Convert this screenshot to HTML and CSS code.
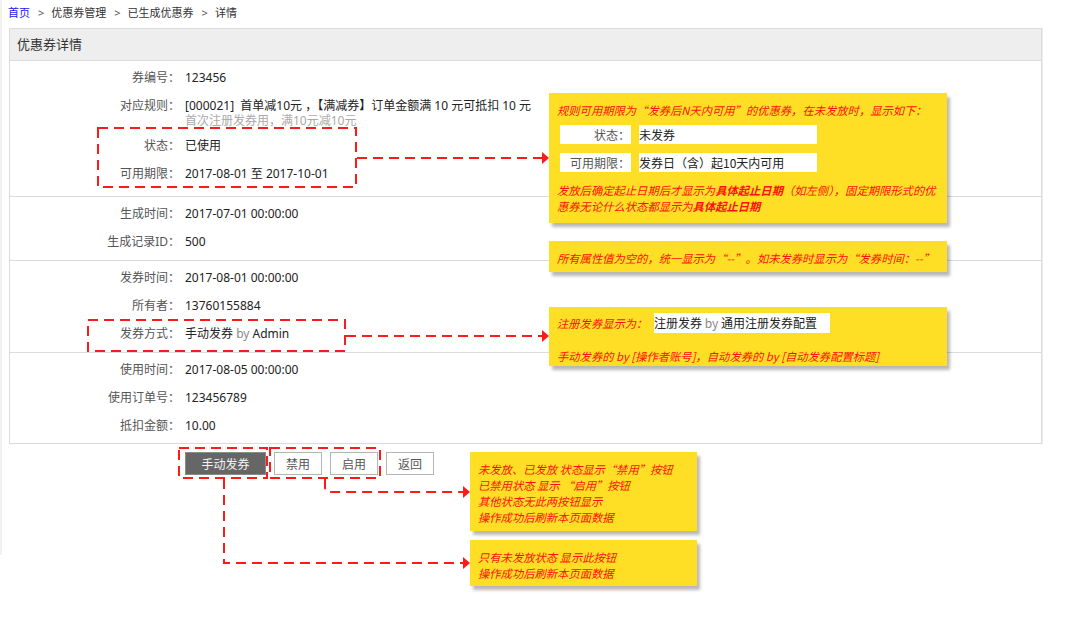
FILE: index.html
```html
<!DOCTYPE html>
<html lang="zh-CN">
<head>
<meta charset="utf-8">
<title>优惠券详情</title>
<link rel="stylesheet" href="styles.css">
</head>
<body>
<div class="page">
  <div class="crumb"><a class="home">首页</a><span class="sep">&gt;</span>优惠券管理<span class="sep">&gt;</span>已生成优惠券<span class="sep">&gt;</span>详情</div>

  <div class="panel">
    <div class="panel-head">优惠券详情</div>
    <div class="sec sec-first">
      <div class="row"><div class="lbl">券编号：</div><div class="val">123456</div></div>
      <div class="row"><div class="lbl">对应规则：</div><div class="val">[000021]&nbsp; 首单减10元 ，【满减券】订单金额满 10 元可抵扣 10 元<div class="sub">首次注册发券用，满10元减10元</div></div></div>
      <div class="row"><div class="lbl">状态：</div><div class="val">已使用</div></div>
      <div class="row"><div class="lbl">可用期限：</div><div class="val">2017-08-01 至 2017-10-01</div></div>
    </div>
    <div class="sec">
      <div class="row"><div class="lbl">生成时间：</div><div class="val">2017-07-01 00:00:00</div></div>
      <div class="row"><div class="lbl">生成记录ID：</div><div class="val">500</div></div>
    </div>
    <div class="sec">
      <div class="row"><div class="lbl">发券时间：</div><div class="val">2017-08-01 00:00:00</div></div>
      <div class="row"><div class="lbl">所有者：</div><div class="val">13760155884</div></div>
      <div class="row"><div class="lbl">发券方式：</div><div class="val">手动发券 <span class="by">by</span> Admin</div></div>
    </div>
    <div class="sec sec-last">
      <div class="row"><div class="lbl">使用时间：</div><div class="val">2017-08-05 00:00:00</div></div>
      <div class="row"><div class="lbl">使用订单号：</div><div class="val">123456789</div></div>
      <div class="row"><div class="lbl">抵扣金额：</div><div class="val">10.00</div></div>
    </div>
  </div>

  <div class="actions">
    <button class="btn btn-dark">手动发券</button>
    <button class="btn">禁用</button>
    <button class="btn">启用</button>
    <button class="btn">返回</button>
  </div>

  <svg class="annot" width="1069" height="618" viewBox="0 0 1069 618" xmlns="http://www.w3.org/2000/svg">
    <g fill="none" stroke="#ff1a1a" stroke-width="2" stroke-dasharray="10 6">
      <rect x="98" y="128" width="258" height="59"/>
      <path d="M357 158 H542"/>
      <rect x="88" y="320" width="257" height="31"/>
      <path d="M346 336 H542"/>
      <rect x="179" y="448" width="88" height="30"/>
      <rect x="270" y="448" width="110" height="30"/>
      <path d="M325 479 V487 Q325 492 330 492 H463"/>
      <path d="M224 479 V563 H463"/>
    </g>
    <g fill="#ff1a1a">
      <path d="M542 152 L549 158 L542 164 Z"/>
      <path d="M542 330 L549 336 L542 342 Z"/>
      <path d="M463 486 L470 492 L463 498 Z"/>
      <path d="M463 557 L470 563 L463 569 Z"/>
    </g>
  </svg>

  <div class="note n1">
    <p>规则可用期限为“发券后N天内可用”的优惠券，在未发放时，显示如下：</p>
    <div class="kv"><span class="k">状态：</span><span class="v">未发券</span></div>
    <div class="kv"><span class="k">可用期限：</span><span class="v">发券日（含）起10天内可用</span></div>
    <p class="gap">发放后确定起止日期后才显示为<b>具体起止日期</b>（如左侧），固定期限形式的优惠券无论什么状态都显示为<b>具体起止日期</b></p>
  </div>

  <div class="note n2">
    <p>所有属性值为空的，统一显示为“--”。如未发券时显示为“发券时间：--”</p>
  </div>

  <div class="note n3">
    <div class="reg"><span class="reg-t">注册发券显示为：</span><span class="reg-v">注册发券 <span class="by">by</span> 通用注册发券配置</span></div>
    <p class="gap2">手动发券的 by [操作者账号]，自动发券的 by [自动发券配置标题]</p>
  </div>

  <div class="note n4">
    <p>未发放、已发放 状态显示“禁用”按钮</p>
    <p>已禁用状态 显示 “启用”按钮</p>
    <p>其他状态无此两按钮显示</p>
    <p>操作成功后刷新本页面数据</p>
  </div>

  <div class="note n5">
    <p>只有未发放状态 显示此按钮</p>
    <p>操作成功后刷新本页面数据</p>
  </div>
</div>
</body>
</html>
```

FILE: styles.css
```css
* { box-sizing: border-box; }

html, body {
  margin: 0;
  padding: 0;
  background: #ffffff;
}

body {
  font-family: "Noto Sans", "Noto Sans CJK SC", sans-serif;
  font-size: 12px;
  color: #222;
}

.page {
  position: relative;
  width: 1069px;
  height: 618px;
  background: linear-gradient(to right, #f1f1f1 2px, transparent 2px) no-repeat;
  background-size: 2px 555px;
}

.crumb {
  padding: 6px 8px 0;
  line-height: 14px;
  height: 20px;
  font-size: 11px;
  color: #333;
}

.crumb .home {
  color: #1a1aee;
}

.crumb .sep {
  margin: 0 7px 0 8px;
  color: #555;
}

.panel {
  margin: 8px 0 0 9px;
  width: 1033px;
  border: 1px solid #dcdcdc;
  box-shadow: 1px 0 0 #ececec;
}

.panel-head {
  height: 32px;
  line-height: 31px;
  padding-left: 7px;
  background: #eeeeee;
  border-bottom: 1px solid #dcdcdc;
  font-size: 13px;
  color: #333;
}

.sec {
  padding: 3px 0 4px;
  border-top: 1px solid #dcdcdc;
}

.sec-first {
  border-top: none;
  padding: 3px 0 8px;
}

.sec-last {
  padding-bottom: 3px;
}

.row {
  display: flex;
  align-items: flex-start;
  line-height: 28px;
}

.lbl {
  width: 170px;
  text-align: right;
  color: #555;
  flex-shrink: 0;
}

.val {
  margin-left: 5px;
  color: #222;
}

.sub {
  line-height: 14px;
  margin: -6px 0 4px;
  color: #aaa;
}

.by {
  color: #888;
}

.actions {
  display: flex;
  gap: 8px;
  margin-top: 8px;
  padding-left: 185px;
}

.btn {
  height: 23px;
  width: 48px;
  padding: 0;
  font: inherit;
  font-size: 12px;
  background: #fff;
  border: 1px solid #b5b5b5;
  color: #555;
}

.btn-dark {
  width: 81px;
  background: #666;
  border-color: #8a8a8a;
  color: #f2f2f2;
}

.annot {
  position: absolute;
  left: 0;
  top: 0;
  pointer-events: none;
}

.note {
  position: absolute;
  background: #ffdf25;
  box-shadow: 3px 4px 3px rgba(0, 0, 0, 0.28);
  color: #ff1010;
  font-family: "Noto Sans CJK SC", sans-serif;
  font-size: 11.3px;
  font-style: italic;
  line-height: 16px;
  padding: 9px 6px 6px 8px;
}

.note p {
  margin: 0;
}

.note b {
  font-weight: bold;
}

.n1 {
  left: 549px;
  top: 93px;
  width: 398px;
  height: 130px;
  padding-top: 9px;
}

.kv {
  display: flex;
  gap: 8px;
  margin: 7px 0 0 3px;
  font-style: normal;
  font-size: 12px;
  line-height: 19px;
}

.kv + .kv {
  margin-top: 9px;
}

.kv .k {
  width: 71px;
  background: #fff;
  color: #555;
  text-align: right;
  padding-right: 1px;
}

.kv .v {
  width: 178px;
  background: #fff;
  color: #222;
}

.n1 .gap {
  margin-top: 10px;
}

.n2 {
  left: 549px;
  top: 241px;
  width: 398px;
  height: 31px;
}

.n3 {
  left: 549px;
  top: 307px;
  width: 398px;
  height: 59px;
  padding-top: 6px;
}

.reg {
  display: flex;
  align-items: center;
  height: 20px;
}

.reg-t {
  width: 97px;
}

.reg-v {
  width: 176px;
  height: 20px;
  line-height: 20px;
  background: #fff;
  color: #222;
  font-size: 12px;
  font-style: normal;
}

.n3 .gap2 {
  margin-top: 15px;
}

.n4 {
  left: 470px;
  top: 452px;
  width: 227px;
  height: 79px;
}

.n5 {
  left: 470px;
  top: 540px;
  width: 227px;
  height: 46px;
}
```
